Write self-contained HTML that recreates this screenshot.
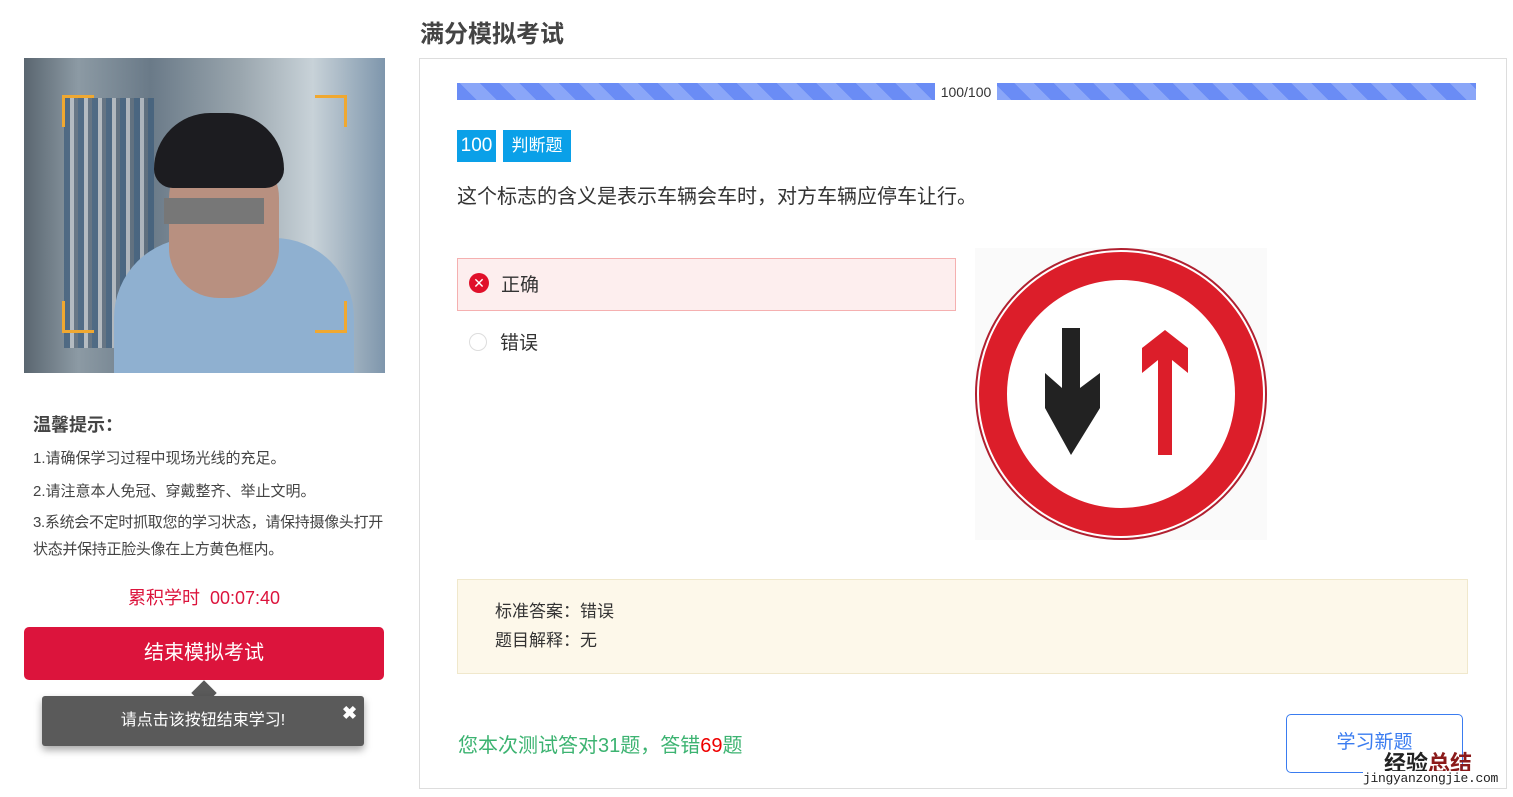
<!DOCTYPE html>
<html><head><meta charset="utf-8"><style>
*{margin:0;padding:0;box-sizing:border-box}
body{width:1513px;height:797px;background:#fff;font-family:"Liberation Sans","Noto Sans CJK SC",sans-serif;color:#333;position:relative;overflow:hidden}
.abs{position:absolute}
.cam{left:24px;top:58px;width:361px;height:315px;background:linear-gradient(90deg,#5a6670 0%,#8c9aa4 15%,#6a7a88 35%,#9aa6ae 60%,#c8d2d8 80%,#7e96ac 100%);overflow:hidden}
.corner{position:absolute;width:32px;height:32px;border-color:#f0a830;border-style:solid;border-width:0}
</style></head><body>
<div class="abs" style="left:420px;top:14px;font-size:24px;font-weight:bold;color:#444">满分模拟考试</div>
<div class="abs cam">
 <div class="abs" style="left:40px;top:40px;width:90px;height:250px;background:repeating-linear-gradient(90deg,#3a5a7a 0 6px,#c8ccd0 6px 10px,#5a6a7a 10px 14px);opacity:.7"></div>
 <div class="abs" style="left:90px;top:180px;width:240px;height:140px;background:#8fb0d0;border-radius:80px 80px 0 0"></div>
 <div class="abs" style="left:145px;top:90px;width:110px;height:150px;background:#b89080;border-radius:50px"></div>
 <div class="abs" style="left:130px;top:55px;width:130px;height:75px;background:#1c1c20;border-radius:60px 60px 20px 20px"></div>
 <div class="abs" style="left:140px;top:140px;width:100px;height:26px;background:#777"></div>
 <div class="corner" style="left:38px;top:37px;border-top-width:3px;border-left-width:3px"></div>
 <div class="corner" style="left:291px;top:37px;border-top-width:3px;border-right-width:3px"></div>
 <div class="corner" style="left:38px;top:243px;border-bottom-width:3px;border-left-width:3px"></div>
 <div class="corner" style="left:291px;top:243px;border-bottom-width:3px;border-right-width:3px"></div>
</div>
<div class="abs" style="left:33px;top:411px;font-size:18px;font-weight:bold;color:#444">温馨提示：</div>
<div class="abs" style="left:33px;top:442px;font-size:15px;line-height:33px;color:#444;width:360px">1.请确保学习过程中现场光线的充足。<br>2.请注意本人免冠、穿戴整齐、举止文明。</div>
<div class="abs" style="left:33px;top:509px;font-size:15px;line-height:27px;color:#444;width:356px;letter-spacing:-0.3px">3.系统会不定时抓取您的学习状态，请保持摄像头打开状态并保持正脸头像在上方黄色框内。</div>
<div class="abs" style="left:0;width:408px;top:584px;text-align:center;font-size:18px;color:#dc143c">累积学时&nbsp; 00:07:40</div>
<div class="abs" style="left:24px;top:627px;width:360px;height:53px;background:#dc143c;border-radius:5px;color:#fff;font-size:20px;text-align:center;line-height:53px">结束模拟考试</div>
<div class="abs" style="left:195px;top:684px;width:18px;height:18px;background:#5a5a5a;transform:rotate(45deg)"></div>
<div class="abs" style="left:42px;top:696px;width:322px;height:50px;background:#5a5a5a;border-radius:3px;box-shadow:0 4px 8px rgba(0,0,0,.35);color:#fff;font-size:16px;text-align:center;line-height:50px">请点击该按钮结束学习!</div>
<div class="abs" style="left:342px;top:703px;color:#fff;font-size:18px;font-weight:bold">✖</div>

<div class="abs" style="left:419px;top:58px;width:1088px;height:731px;border:1px solid #ddd"></div>
<div class="abs" style="left:457px;top:83px;width:1019px;height:17px;background:repeating-linear-gradient(45deg,#6a8cf5 0 14px,#8aa6f8 14px 28px)"></div>
<div class="abs" style="left:935px;top:83px;width:62px;height:17px;background:#fff;font-size:14px;line-height:18px;text-align:center;color:#333">100/100</div>
<div class="abs" style="left:457px;top:130px;width:39px;height:32px;background:#0aa0e8;color:#fff;font-size:19px;text-align:center;line-height:32px">100</div>
<div class="abs" style="left:503px;top:130px;width:68px;height:32px;background:#0aa0e8;color:#fff;font-size:17px;text-align:center;line-height:32px">判断题</div>
<div class="abs" style="left:457px;top:180px;font-size:20px;color:#333">这个标志的含义是表示车辆会车时，对方车辆应停车让行。</div>
<div class="abs" style="left:457px;top:258px;width:499px;height:53px;background:#fdeeee;border:1px solid #f5b0b0"></div>
<div class="abs" style="left:469px;top:273px;width:20px;height:20px;border-radius:50%;background:#e0102a;color:#fff;font-size:14px;text-align:center;line-height:20px">✕</div>
<div class="abs" style="left:501px;top:270px;font-size:19px;color:#333">正确</div>
<div class="abs" style="left:469px;top:333px;width:18px;height:18px;border-radius:50%;border:1px solid #ddd"></div>
<div class="abs" style="left:500px;top:328px;font-size:19px;color:#333">错误</div>
<svg class="abs" style="left:975px;top:248px" width="292" height="292" viewBox="0 0 292 292">
<rect width="292" height="292" fill="#fafafa"/>
<circle cx="146" cy="146" r="145" fill="#fff" stroke="#b02030" stroke-width="2"/>
<circle cx="146" cy="146" r="128" fill="none" stroke="#dc1e2a" stroke-width="28"/>
<polygon points="87,80 105,80 105,140 125,125 125,160 96,207 70,160 70,125 87,140" fill="#222"/>
<polygon points="183,207 197,207 197,112 213,125 213,100 190,82 167,100 167,125 183,112" fill="#dc1e2a"/>
</svg>
<div class="abs" style="left:457px;top:579px;width:1011px;height:95px;background:#fdf8ea;border:1px solid #f0e8cc"></div>
<div class="abs" style="left:495px;top:597px;font-size:17px;line-height:29px;color:#333">标准答案：错误<br>题目解释：无</div>
<div class="abs" style="left:458px;top:729px;font-size:20px;color:#3cb371">您本次测试答对31题，答错<span style="color:#e00">69</span>题</div>
<div class="abs" style="left:1286px;top:714px;width:177px;height:59px;border:1px solid #3a7cf0;border-radius:5px;color:#3a7cf0;font-size:19px;text-align:center;line-height:56px">学习新题</div>
<div class="abs" style="left:1384px;top:746px;font-size:22px;font-weight:bold;color:#222">经验<span style="color:#8b1a1a">总结</span></div>
<div class="abs" style="left:1363px;top:771px;font-size:13px;font-family:'Liberation Mono',monospace;color:#222;background:#fff;letter-spacing:-0.3px">jingyanzongjie.com</div>
</body></html>
